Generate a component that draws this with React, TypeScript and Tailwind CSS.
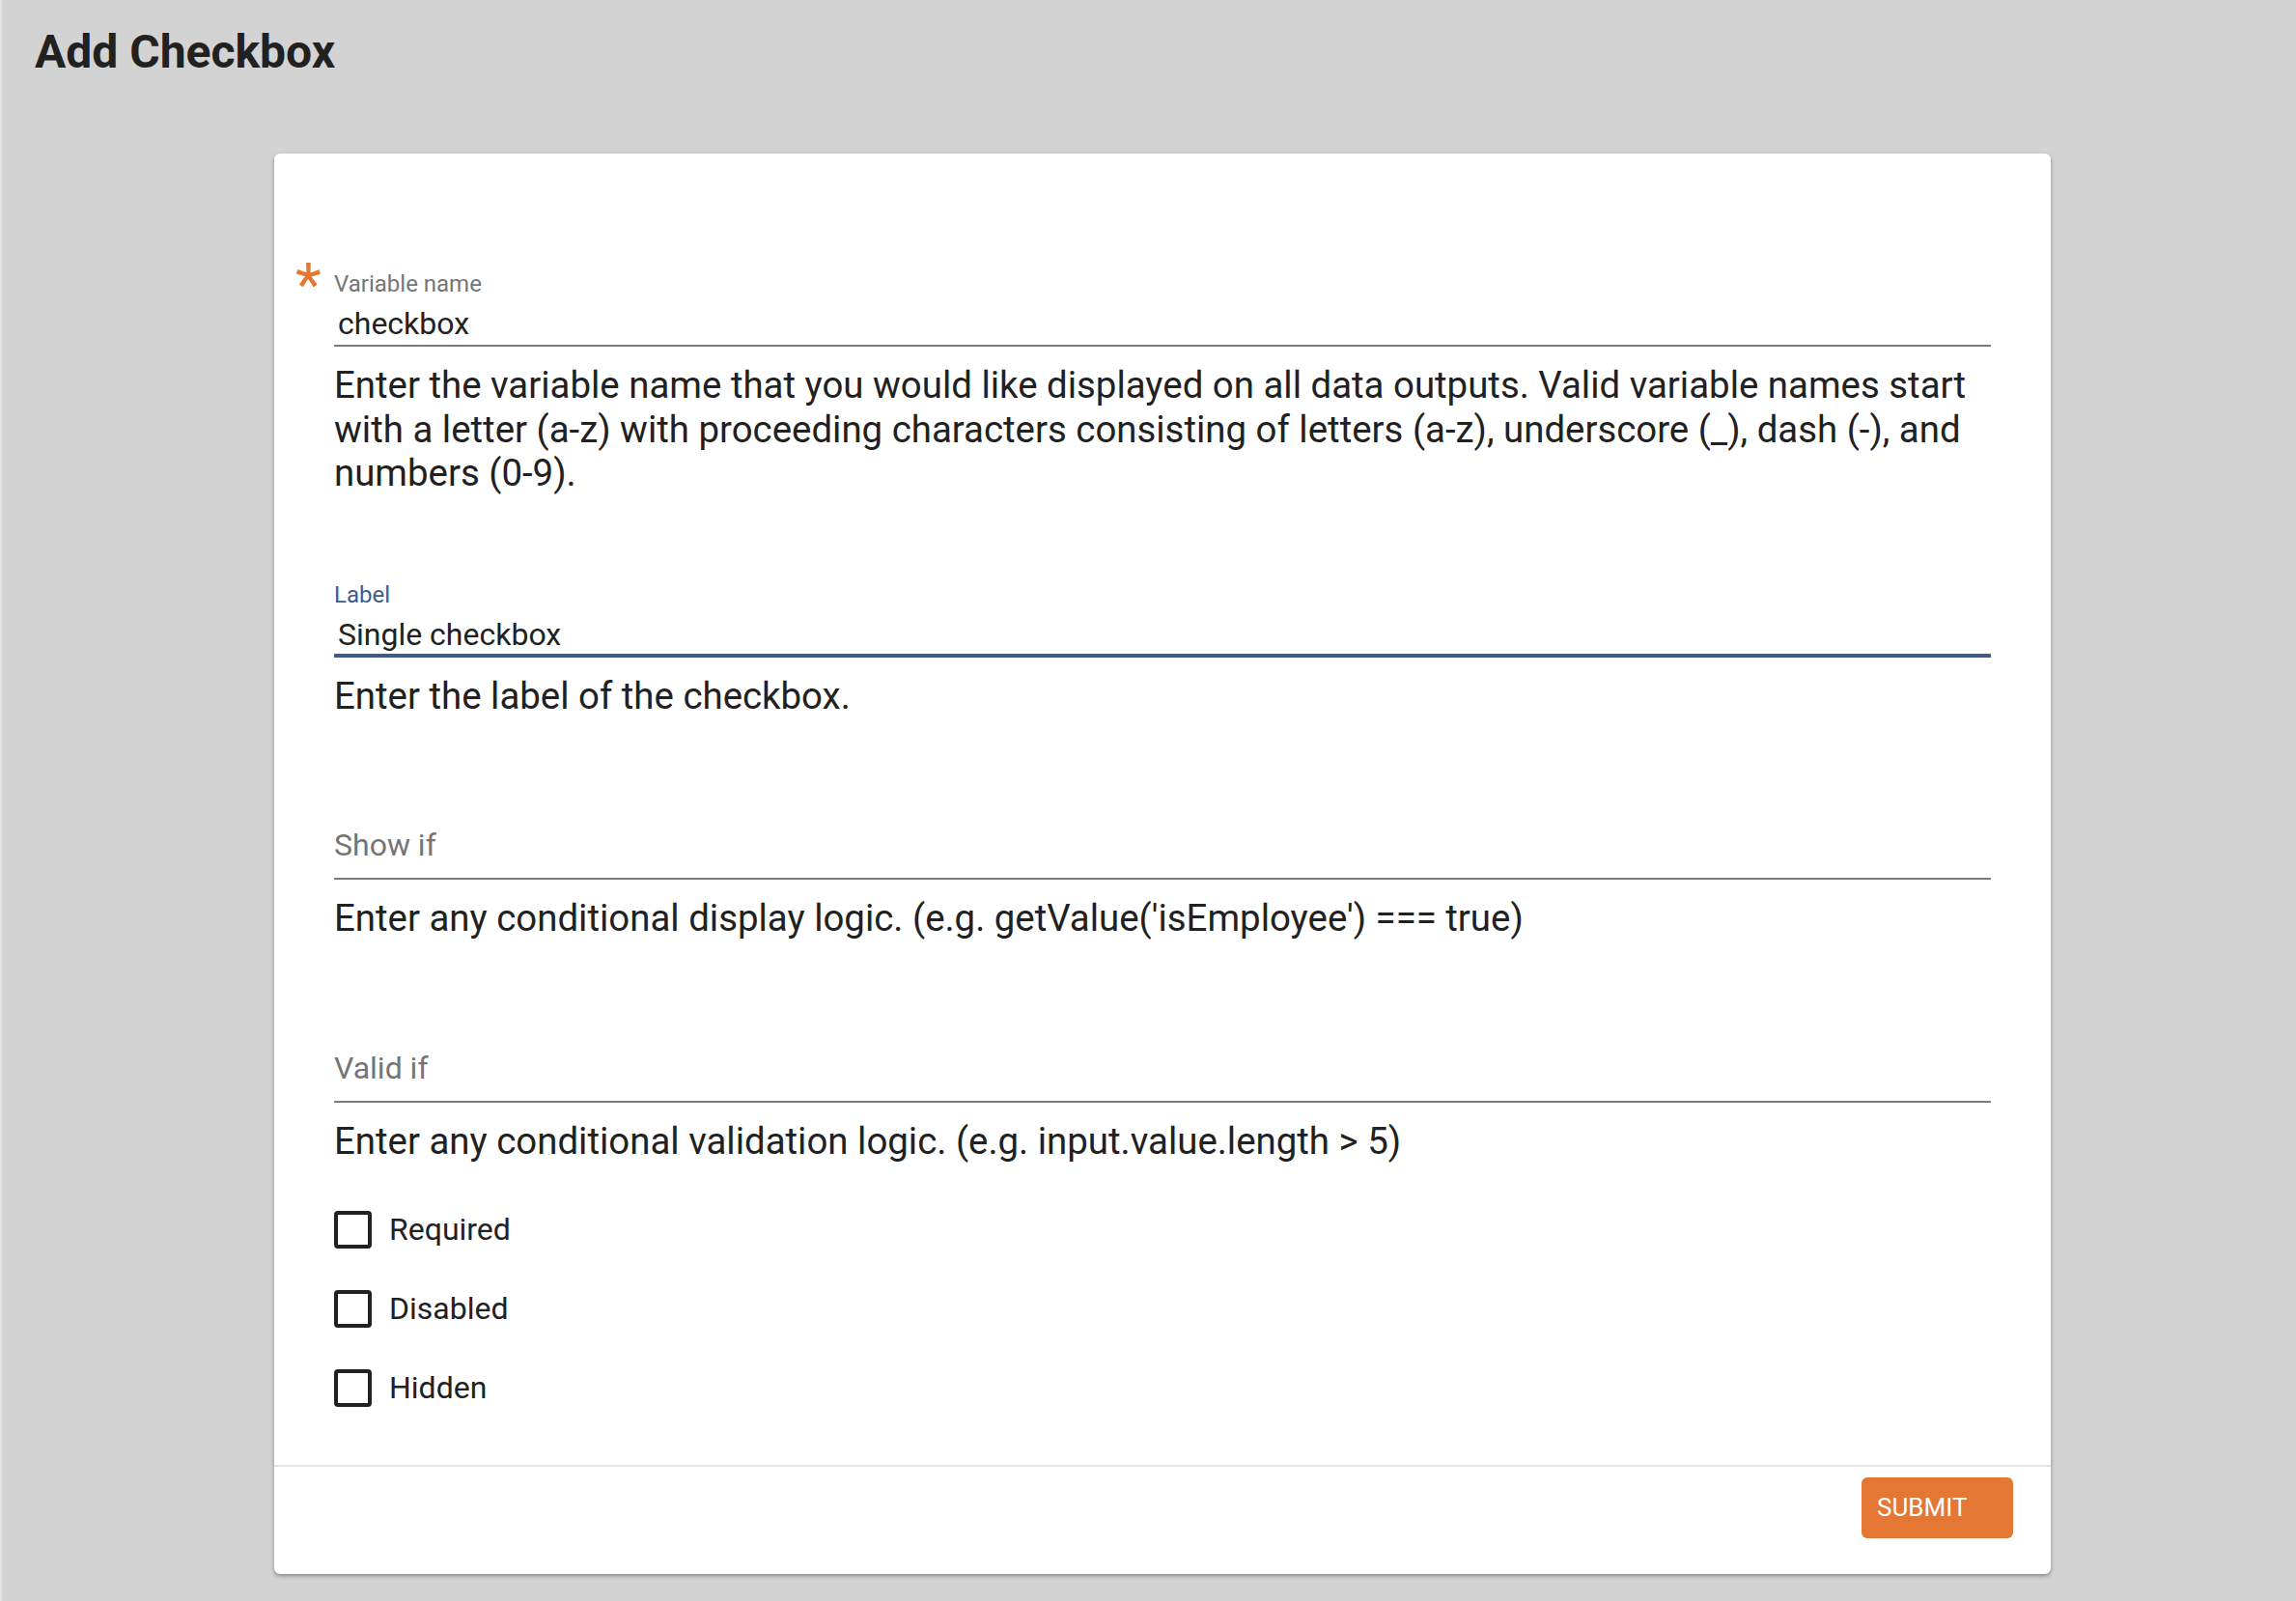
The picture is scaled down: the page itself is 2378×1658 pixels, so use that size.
import React from "react";

type FieldProps = {
  label: string;
  value?: string;
  help: string;
  required?: boolean;
  focused?: boolean;
};

const Field = ({ label, value, help, required, focused }: FieldProps) => {
  const hasValue = value !== undefined;
  return (
    <div className="relative">
      {required && (
        <span className="absolute left-[-40px] top-[-16px] text-[62px] leading-[62px] text-[#e37733]">*</span>
      )}
      <div className={`h-[28px] text-[24px] leading-[28px] ${focused ? "text-[#415a8c]" : "text-[#757575]"}`}>
        {hasValue ? label : ""}
      </div>
      <div
        className={`mt-[8px] ${
          focused ? "border-b-4 border-[#415a8c] pb-[1px]" : "border-b-2 border-[#7b7b7b] pb-[3px]"
        }`}
      >
        {hasValue ? (
          <div className="h-[38px] pl-[4px] text-[32px] leading-[38px] text-[#212121]">{value}</div>
        ) : (
          <div className="h-[38px] -translate-y-[12px] text-[32px] leading-[38px] text-[#757575]">{label}</div>
        )}
      </div>
      <p className="mt-[17px] text-[38.4px] leading-[45.5px] text-[#212121]">{help}</p>
    </div>
  );
};

const CheckRow = ({ label }: { label: string }) => (
  <label className="flex h-[82px] items-center gap-[18px]">
    <span className="h-[39px] w-[39px] rounded-[4px] border-[4px] border-[#212121]" />
    <span className="text-[32px] leading-[38px] text-[#212121]">{label}</span>
  </label>
);

export default function App() {
  return (
    <div
      className="min-h-[1658px] border-l-2 border-[#e2e2e2] bg-[#d3d3d3] pt-[25px]"
      style={{ fontFamily: "Roboto, 'Noto Sans', sans-serif" }}
    >
      <h1 className="pl-[34px] text-[48px] font-bold leading-[58px] text-[#212121]">Add Checkbox</h1>

      <div className="ml-[282px] mt-[76px] w-[1840px] rounded-[6px] bg-white shadow-[0_2px_4px_rgba(0,0,0,0.35)]">
        <div className="px-[62px] pb-[39px] pt-[121px]">
          <div className="flex flex-col gap-[89px]">
            <Field
              required
              label="Variable name"
              value="checkbox"
              help="Enter the variable name that you would like displayed on all data outputs. Valid variable names start with a letter (a-z) with proceeding characters consisting of letters (a-z), underscore (_), dash (-), and numbers (0-9)."
            />
            <Field focused label="Label" value="Single checkbox" help="Enter the label of the checkbox." />
            <Field label="Show if" help="Enter any conditional display logic. (e.g. getValue('isEmployee') === true)" />
            <Field label="Valid if" help="Enter any conditional validation logic. (e.g. input.value.length > 5)" />
          </div>
          <div className="pt-[28px]">
            <CheckRow label="Required" />
            <CheckRow label="Disabled" />
            <CheckRow label="Hidden" />
          </div>
        </div>
        <div className="flex justify-end border-t-2 border-[#e6e6e6] pb-[37px] pr-[39px] pt-[11px]">
          <button className="h-[63px] w-[157px] rounded-[6px] bg-[#e37733] pl-[16px] text-left text-[26px] text-white">
            SUBMIT
          </button>
        </div>
      </div>
    </div>
  );
}
